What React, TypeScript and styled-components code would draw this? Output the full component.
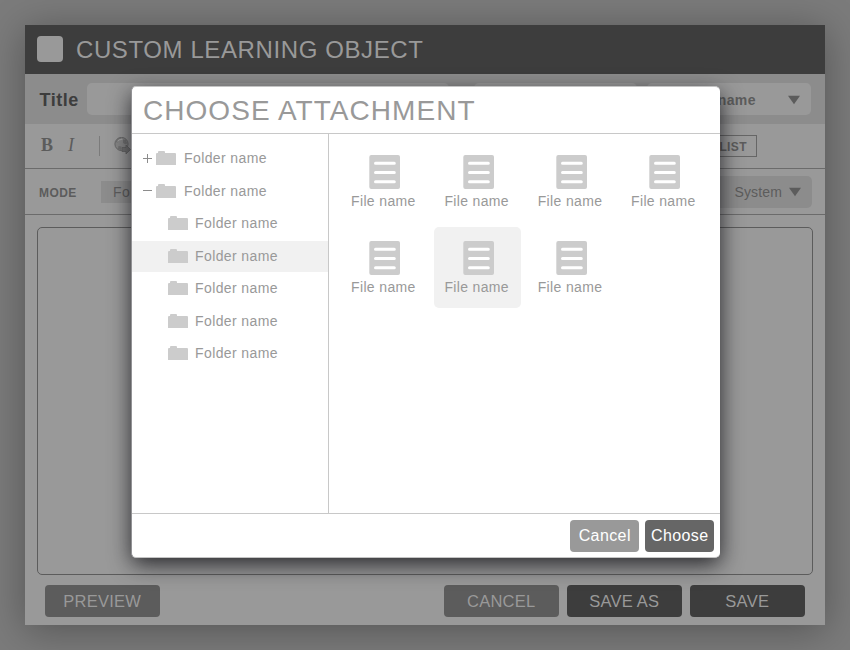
import React from "react";
import styled, { createGlobalStyle } from "styled-components";

const GlobalStyle = createGlobalStyle`
  * { box-sizing: border-box; }
  body {
    margin: 0;
    background: #7b7b7b;
    font-family: "Liberation Sans", Arial, sans-serif;
  }
`;

const Desktop = styled.div`
  position: relative;
  width: 850px;
  height: 650px;
  padding: 25px;
  overflow: hidden;
  background: #7b7b7b;
`;

const Window = styled.div`
  display: flex;
  flex-direction: column;
  width: 800px;
  height: 600px;
  background: #999;
  box-shadow: 0 5px 38px rgba(0, 0, 0, 0.32);
`;

const Header = styled.header`
  display: flex;
  align-items: center;
  gap: 14px;
  height: 49px;
  padding: 0 0 1px 12px;
  background: #3d3d3d;
`;

const Logo = styled.div`
  width: 26px;
  height: 26px;
  border-radius: 4px;
  background: #999;
`;

const AppTitle = styled.h1`
  margin: 1px 0 0 -1px;
  color: #999;
  font-size: 24px;
  font-weight: 400;
  line-height: 28px;
  letter-spacing: 0.6px;
`;

const TitleRow = styled.div`
  display: flex;
  align-items: center;
  height: 50px;
  padding: 0 13px 0 14px;
  background: #8c8c8c;
`;

const TitleLabel = styled.label`
  width: 48px;
  padding: 2px 0 0 0.5px;
  color: #3d3d3d;
  font-size: 18px;
  font-weight: 700;
  letter-spacing: 0.5px;
`;

const Field = styled.div<{ $width: number; $gap?: number }>`
  display: flex;
  align-items: center;
  justify-content: flex-end;
  gap: 31px;
  width: ${(p) => p.$width}px;
  height: 32px;
  margin-left: ${(p) => p.$gap ?? 0}px;
  padding: 1px 10px 0 0;
  border-radius: 5px;
  background: #999;
  color: #5c5c5c;
  font-size: 14px;
  font-weight: 700;
  letter-spacing: 0.45px;
`;

const Toolbar = styled.div`
  display: flex;
  align-items: center;
  height: 45px;
  padding: 0 68px 0 16px;
  border-bottom: 1px solid #6b6b6b;
`;

const FormatButton = styled.span<{ $italic?: boolean }>`
  width: ${(p) => (p.$italic ? 31 : 27)}px;
  padding-bottom: 2px;
  color: #5c5c5c;
  font-family: "Liberation Serif", serif;
  font-size: 18px;
  font-weight: ${(p) => (p.$italic ? 400 : 700)};
  font-style: ${(p) => (p.$italic ? "italic" : "normal")};
`;

const Separator = styled.div`
  width: 1px;
  height: 20px;
  margin-right: 14px;
  background: #7b7b7b;
`;

const ListButton = styled.div`
  width: 110px;
  height: 22px;
  margin-left: auto;
  padding: 1px 9px 0 0;
  border: 1px solid #666;
  color: #5c5c5c;
  font-size: 12px;
  font-weight: 700;
  line-height: 20px;
  letter-spacing: 0.4px;
  text-align: right;
`;

const ModeRow = styled.div`
  display: flex;
  align-items: center;
  height: 46px;
  padding: 0 13px 0 14px;
  border-bottom: 1px solid #6b6b6b;
`;

const ModeLabel = styled.span`
  width: 62px;
  padding-top: 3px;
  color: #5c5c5c;
  font-size: 12px;
  font-weight: 700;
  letter-spacing: 0.4px;
`;

const ModeOption = styled.span`
  width: 80px;
  height: 22px;
  padding-left: 12px;
  background: #8c8c8c;
  color: #5c5c5c;
  font-size: 14px;
  line-height: 22px;
  letter-spacing: 0.45px;
`;

const SystemSelect = styled(Field)`
  gap: 6px;
  margin-left: auto;
  background: #8c8c8c;
  font-weight: 400;
  letter-spacing: 0.15px;
`;

const Editor = styled.div`
  width: 776px;
  height: 348px;
  margin: 12px 0 0 12px;
  border: 1px solid #5c5c5c;
  border-radius: 5px;
`;

const Actions = styled.footer`
  display: flex;
  gap: 7.5px;
  padding: 9.5px 20px 0 19.5px;
`;

const ActionButton = styled.button<{ $primary?: boolean; $first?: boolean }>`
  width: 115.5px;
  height: 32.5px;
  margin: 0 ${(p) => (p.$first ? "auto" : "0")} 0 0;
  padding: 0;
  border: 0;
  border-radius: 4px;
  background: ${(p) => (p.$primary ? "#3d3d3d" : "#5c5c5c")};
  color: #999;
  font: 16.5px/32px "Liberation Sans", Arial, sans-serif;
  letter-spacing: 0.25px;
`;

const Dialog = styled.section`
  position: absolute;
  top: 86px;
  left: 131px;
  display: flex;
  flex-direction: column;
  width: 589px;
  height: 472px;
  overflow: hidden;
  border: 1px solid #c4c4c4;
  border-left-color: #929295;
  border-right: 0;
  border-radius: 5px;
  background: #fff;
`;

const DialogShadow = styled.div`
  position: absolute;
  top: 87px;
  left: 132px;
  width: 588px;
  height: 470px;
  border-radius: 5px;
  box-shadow: 0 7px 22px rgba(15, 15, 20, 0.85);
`;

const DialogTitle = styled.h2`
  height: 47px;
  margin: 0;
  padding: 7px 0 0 11px;
  border-bottom: 1px solid #c8c8c8;
  color: #999;
  font-size: 28px;
  font-weight: 400;
  line-height: 34px;
  letter-spacing: 1.05px;
`;

const DialogBody = styled.div`
  display: flex;
  height: 379px;
`;

const FolderTree = styled.nav`
  display: flex;
  flex-direction: column;
  gap: 1.5px;
  width: 197px;
  padding-top: 9px;
  border-right: 1px solid #c8c8c8;
`;

const FolderRow = styled.div<{ $child?: boolean; $selected?: boolean }>`
  display: flex;
  align-items: center;
  gap: ${(p) => (p.$child ? 7 : 8)}px;
  height: 31px;
  padding-left: ${(p) => (p.$child ? 36 : 11)}px;
  background: ${(p) => (p.$selected ? "#f1f1f1" : "transparent")};
  color: #999;
  font-size: 14px;
  line-height: 31px;
  letter-spacing: 0.4px;

  svg {
    margin-top: -1px;
  }
`;

const ToggleIcon = styled.svg`
  width: 9px;
  height: 9px;
  margin-right: -4px;
`;

const FileGrid = styled.div`
  display: grid;
  grid-template-columns: repeat(4, 87px);
  grid-auto-rows: 81px;
  gap: 5px 6.33px;
  align-content: start;
  padding: 7px 0 0 11.67px;
`;

const FileCard = styled.div<{ $selected?: boolean }>`
  padding: 14px 0 0 10.4px;
  border-radius: 5px;
  background: ${(p) => (p.$selected ? "#f1f1f1" : "transparent")};
  color: #999;
  font-size: 14px;
  line-height: 16px;
  letter-spacing: 0.35px;
  white-space: nowrap;

  svg {
    display: block;
    margin: 0 0 4px 18.45px;
  }
`;

const DialogFooter = styled.footer`
  display: flex;
  justify-content: flex-end;
  gap: 5.5px;
  flex: 1;
  padding: 5.5px 6px 0 0;
  border-top: 1px solid #c8c8c8;
`;

const DialogButton = styled.button<{ $primary?: boolean }>`
  width: 69.5px;
  height: 32.5px;
  padding: 0 0 0 1px;
  border: 0;
  border-radius: 4px;
  background: ${(p) => (p.$primary ? "#666" : "#999")};
  color: #fff;
  font: 16px/32px "Liberation Sans", Arial, sans-serif;
  letter-spacing: 0.4px;
`;

const Arrow = () => (
  <svg width="14" height="10" viewBox="0 0 14 10">
    <path d="M1 .7h12L7 9.3z" fill="#5c5c5c" />
  </svg>
);

const FolderIcon = () => (
  <svg width="20" height="14" viewBox="0 0 20 14">
    <path d="M0 3a1 1 0 0 1 1-1h1V1a1 1 0 0 1 1-1h5a1 1 0 0 1 1 1v1h10a1 1 0 0 1 1 1v11H0z" fill="#ccc" />
  </svg>
);

const FileIcon = () => (
  <svg width="31" height="34" viewBox="0 0 31 34">
    <rect x=".3" width="30.7" height="34" rx="2" fill="#ccc" />
    <path d="M6.5 8.3h18.8M6.5 17.6h18.8M6.5 26.7h18.8" stroke="#fff" strokeWidth="3" strokeLinecap="round" />
  </svg>
);

const LinkIcon = () => (
  <svg width="18" height="18" viewBox="0 0 18 18">
    <circle cx="7.5" cy="7" r="6.6" fill="#858585" stroke="#686868" />
    <path d="M1.5 5C2.500 2.500 4.500 1 7 1L6 3.500 3.500 5.500zM9 2.500l3 .5 1.200 3.500-2.200.8-2-1.500zM4.500 9l3 .5L7 13 4 12z" fill="#707070" />
    <path d="M3.500 4.500C5 2.500 7 2 8.500 2.500" fill="none" stroke="#a0a0a0" strokeWidth="1.200" />
    <path d="M8 10.500h4V8l4.500 4.500L12 17v-2.500H8z" fill="#707070" stroke="#5c5c5c" strokeWidth=".7" />
  </svg>
);

const folders = [
  { child: false, open: false },
  { child: false, open: true },
  { child: true },
  { child: true, selected: true },
  { child: true },
  { child: true },
  { child: true },
];

const files = [0, 1, 2, 3, 4, 5, 6];

export default function App() {
  return (
    <>
      <GlobalStyle />
      <Desktop>
        <Window>
          <Header>
            <Logo />
            <AppTitle>CUSTOM LEARNING OBJECT</AppTitle>
          </Header>
          <TitleRow>
            <TitleLabel>Title</TitleLabel>
            <Field $width={362} />
            <Field $width={163} $gap={25} />
            <Field $width={164} $gap={10}>
              <span>name</span>
              <Arrow />
            </Field>
          </TitleRow>
          <Toolbar>
            <FormatButton>B</FormatButton>
            <FormatButton $italic>I</FormatButton>
            <Separator />
            <LinkIcon />
            <ListButton>LIST</ListButton>
          </Toolbar>
          <ModeRow>
            <ModeLabel>MODE</ModeLabel>
            <ModeOption>Form</ModeOption>
            <SystemSelect $width={164}>
              <span>System</span>
              <Arrow />
            </SystemSelect>
          </ModeRow>
          <Editor />
          <Actions>
            <ActionButton $first>PREVIEW</ActionButton>
            <ActionButton>CANCEL</ActionButton>
            <ActionButton $primary>SAVE AS</ActionButton>
            <ActionButton $primary>SAVE</ActionButton>
          </Actions>
        </Window>
        <DialogShadow />
        <Dialog>
          <DialogTitle>CHOOSE ATTACHMENT</DialogTitle>
          <DialogBody>
            <FolderTree>
              {folders.map((f, i) => (
                <FolderRow key={i} $child={f.child} $selected={f.selected}>
                  {!f.child && (
                    <ToggleIcon viewBox="0 0 9 9">
                      <path d={f.open ? "M0 4.5h9" : "M0 4.5h9M4.5 0v9"} stroke="#8c8c8c" />
                    </ToggleIcon>
                  )}
                  <FolderIcon />
                  <span>Folder name</span>
                </FolderRow>
              ))}
            </FolderTree>
            <FileGrid>
              {files.map((i) => (
                <FileCard key={i} $selected={i === 5}>
                  <FileIcon />
                  File name
                </FileCard>
              ))}
            </FileGrid>
          </DialogBody>
          <DialogFooter>
            <DialogButton>Cancel</DialogButton>
            <DialogButton $primary>Choose</DialogButton>
          </DialogFooter>
        </Dialog>
      </Desktop>
    </>
  );
}
